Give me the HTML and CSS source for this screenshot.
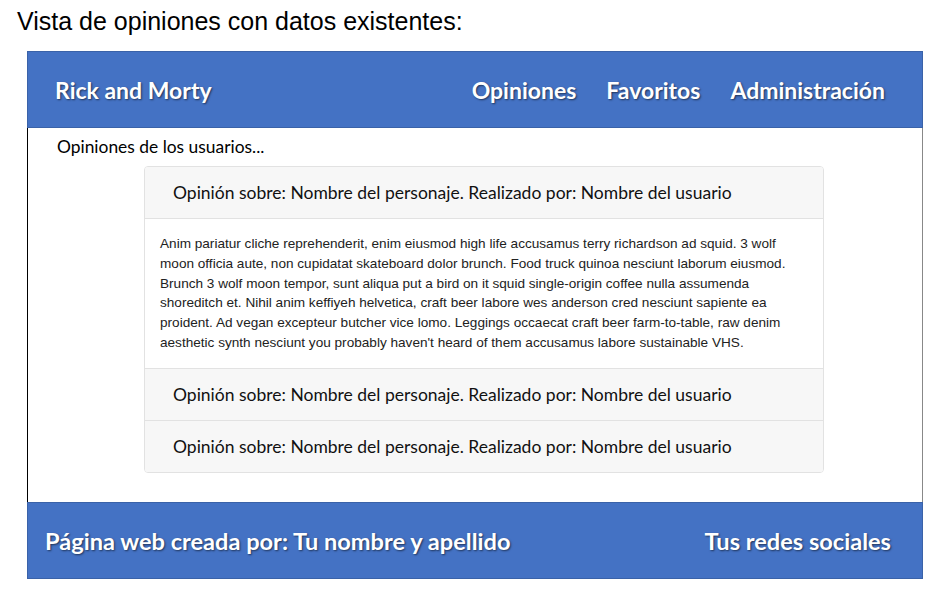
FILE: index.html
```html
<!DOCTYPE html>
<html lang="es">
<head>
<meta charset="utf-8">
<title>Vista de opiniones</title>
<link rel="stylesheet" href="styles.css">
</head>
<body>
<h1 class="doc-title">Vista de opiniones con datos existentes:</h1>
<div class="frame">
  <header class="topbar">
    <span class="brand">Rick and Morty</span>
    <nav class="nav">
      <span>Opiniones</span>
      <span>Favoritos</span>
      <span>Administración</span>
    </nav>
  </header>
  <main class="content">
    <p class="intro">Opiniones de los usuarios...</p>
    <div class="accordion">
      <div class="acc-head">Opinión sobre: Nombre del personaje. Realizado por: Nombre del usuario</div>
      <div class="acc-body">Anim pariatur cliche reprehenderit, enim eiusmod high life accusamus terry richardson ad squid. 3 wolf moon officia aute, non cupidatat skateboard dolor brunch. Food truck quinoa nesciunt laborum eiusmod. Brunch 3 wolf moon tempor, sunt aliqua put a bird on it squid single-origin coffee nulla assumenda shoreditch et. Nihil anim keffiyeh helvetica, craft beer labore wes anderson cred nesciunt sapiente ea proident. Ad vegan excepteur butcher vice lomo. Leggings occaecat craft beer farm-to-table, raw denim aesthetic synth nesciunt you probably haven't heard of them accusamus labore sustainable VHS.</div>
      <div class="acc-head">Opinión sobre: Nombre del personaje. Realizado por: Nombre del usuario</div>
      <div class="acc-head">Opinión sobre: Nombre del personaje. Realizado por: Nombre del usuario</div>
    </div>
  </main>
  <footer class="bottombar">
    <span>Página web creada por: Tu nombre y apellido</span>
    <span>Tus redes sociales</span>
  </footer>
</div>
</body>
</html>
```
FILE: styles.css
```css
html, body {
  margin: 0;
  padding: 0;
  background: #ffffff;
}
body {
  width: 948px;
  height: 602px;
  overflow: hidden;
}
.doc-title {
  margin: 0;
  padding: 6px 0 0 17px;
  height: 44px;
  box-sizing: border-box;
  font-family: "Liberation Sans", Arial, sans-serif;
  font-weight: normal;
  font-size: 25px;
  line-height: 30px;
  color: #000;
}
.frame {
  margin: 7px 0 0 27px;
  width: 896px;
  display: flex;
  flex-direction: column;
}
.topbar, .bottombar {
  background: #4472c4;
  height: 77px;
  box-sizing: border-box;
  display: flex;
  align-items: center;
  justify-content: space-between;
  color: #fff;
  font-family: Lato, "Open Sans", sans-serif;
  font-weight: bold;
  font-size: 23px;
  text-shadow: 1px 1px 2px rgba(0,0,0,0.55);
  border: 1px solid #3a62a8;
}
.topbar {
  padding: 0 37px 0 27px;
}
.nav {
  display: flex;
  gap: 30px;
}
.bottombar {
  padding: 0 31px 0 17px;
  font-size: 23.6px;
}
.content {
  border-left: 1px solid #000;
  border-right: 1px solid #888;
  padding: 8px 0 30px 0;
  height: 374px;
  box-sizing: border-box;
}
.intro {
  margin: 0 0 8px 29px;
  font-family: Lato, "Open Sans", sans-serif;
  font-size: 17.4px;
  line-height: 22px;
  color: #000;
}
.accordion {
  margin-left: 116px;
  width: 678px;
  border: 1px solid #e2e2e2;
  border-radius: 4px;
  overflow: hidden;
}
.acc-head {
  background: #f7f7f7;
  height: 52px;
  box-sizing: border-box;
  padding: 0 0 0 28px;
  display: flex;
  align-items: center;
  font-family: Lato, "Open Sans", sans-serif;
  font-size: 17.5px;
  color: #111;
  border-top: 1px solid #e2e2e2;
}
.acc-head:first-child {
  border-top: none;
  height: 51px;
}
.acc-body {
  background: #fff;
  border-top: 1px solid #e2e2e2;
  padding: 15px 22px 15px 15px;
  font-family: "Liberation Sans", Arial, sans-serif;
  font-size: 13.6px;
  line-height: 19.8px;
  color: #222;
}
```
